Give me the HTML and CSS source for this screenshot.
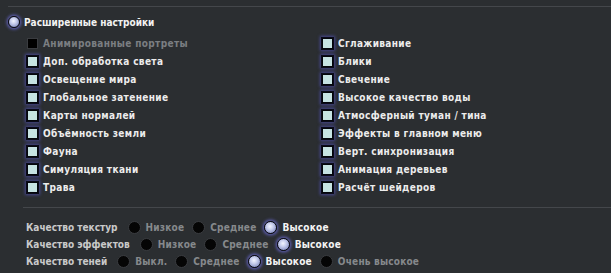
FILE: index.html
```html
<!DOCTYPE html>
<html lang="ru">
<head>
<meta charset="utf-8">
<link rel="stylesheet" href="styles.css">
</head>
<body>
<div class="panel">
  <div class="rule rule-top"></div>
  <div class="master">
    <span class="radio on"></span>
    <span class="master-label">Расширенные настройки</span>
  </div>
  <div class="options">
    <div class="col">
      <div class="opt disabled"><span class="box"></span><span>Анимированные портреты</span></div>
      <div class="opt"><span class="box"></span><span>Доп. обработка света</span></div>
      <div class="opt"><span class="box"></span><span>Освещение мира</span></div>
      <div class="opt"><span class="box"></span><span>Глобальное затенение</span></div>
      <div class="opt"><span class="box"></span><span>Карты нормалей</span></div>
      <div class="opt"><span class="box"></span><span>Объёмность земли</span></div>
      <div class="opt"><span class="box"></span><span>Фауна</span></div>
      <div class="opt"><span class="box"></span><span>Симуляция ткани</span></div>
      <div class="opt"><span class="box"></span><span>Трава</span></div>
    </div>
    <div class="col">
      <div class="opt"><span class="box"></span><span>Сглаживание</span></div>
      <div class="opt"><span class="box"></span><span>Блики</span></div>
      <div class="opt"><span class="box"></span><span>Свечение</span></div>
      <div class="opt"><span class="box"></span><span>Высокое качество воды</span></div>
      <div class="opt"><span class="box"></span><span>Атмосферный туман / тина</span></div>
      <div class="opt"><span class="box"></span><span>Эффекты в главном меню</span></div>
      <div class="opt"><span class="box"></span><span>Верт. синхронизация</span></div>
      <div class="opt"><span class="box"></span><span>Анимация деревьев</span></div>
      <div class="opt"><span class="box"></span><span>Расчёт шейдеров</span></div>
    </div>
  </div>
  <div class="rule rule-bottom"></div>
  <div class="quality">
    <div class="qrow">
      <span class="qlabel">Качество текстур</span>
      <span class="choice"><span class="radio"></span><span>Низкое</span></span>
      <span class="choice"><span class="radio"></span><span>Среднее</span></span>
      <span class="choice sel"><span class="radio on"></span><span>Высокое</span></span>
    </div>
    <div class="qrow">
      <span class="qlabel">Качество эффектов</span>
      <span class="choice"><span class="radio"></span><span>Низкое</span></span>
      <span class="choice"><span class="radio"></span><span>Среднее</span></span>
      <span class="choice sel"><span class="radio on"></span><span>Высокое</span></span>
    </div>
    <div class="qrow">
      <span class="qlabel">Качество теней</span>
      <span class="choice"><span class="radio"></span><span>Выкл.</span></span>
      <span class="choice"><span class="radio"></span><span>Среднее</span></span>
      <span class="choice sel"><span class="radio on"></span><span>Высокое</span></span>
      <span class="choice"><span class="radio"></span><span>Очень высокое</span></span>
    </div>
  </div>
</div>
</body>
</html>
```
FILE: styles.css
```css
html, body {
  margin: 0;
  padding: 0;
  background: #2b2e31;
}
body {
  width: 611px;
  height: 273px;
  overflow: hidden;
  font-family: "DejaVu Sans Condensed", "DejaVu Sans", "Liberation Sans", sans-serif;
  font-stretch: condensed;
  font-size: 10px;
  font-weight: bold;
  color: #e6e6e6;
}
.panel {
  padding-top: 6px;
}
.rule {
  height: 1px;
  background: #44474b;
}
.rule-top {
  margin-left: 8px;
}
.master {
  display: flex;
  align-items: center;
  gap: 4px;
  height: 16px;
  margin-top: 7px;
  padding-left: 8px;
}
.master-label {
  color: #f2f2f2;
  letter-spacing: 0;
}
.radio {
  box-sizing: border-box;
  width: 12px;
  height: 12px;
  border-radius: 50%;
  background: #050505;
  border: 1px solid #3a3c40;
  flex: none;
}
.radio.on {
  background: radial-gradient(circle at 45% 40%, #f2f4ff 0, #c9cfee 35%, #8e97c8 75%);
  border: 1.5px solid #0a0a14;
  box-shadow: 0 0 3px 1.5px rgba(110, 110, 220, 0.7);
}
.options {
  display: grid;
  grid-template-columns: 295px 1fr;
  margin-top: 4px;
  padding-left: 27px;
}
.col {
  display: flex;
  flex-direction: column;
}
.opt {
  display: flex;
  align-items: center;
  gap: 5px;
  height: 18px;
  color: #ececec;
  letter-spacing: 0.35px;
}
.box {
  box-sizing: border-box;
  width: 11px;
  height: 11px;
  background: #c6e3e3;
  border: 1px solid #05060c;
  box-shadow: 0 0 0 1px #0a0b18, 0 0 3px 2px rgba(90, 90, 210, 0.6);
  flex: none;
}
.opt.disabled {
  color: #7b7e82;
}
.opt.disabled .box {
  background: #000;
  border: 1px solid #3a3c40;
  box-shadow: none;
}
.rule-bottom {
  margin-top: 11px;
  margin-left: 23px;
}
.quality {
  padding-top: 11px;
  padding-left: 26px;
}
.qrow {
  display: flex;
  align-items: center;
  height: 17px;
}
.qlabel {
  color: #c9c9c9;
  margin-right: 10px;
  letter-spacing: 0;
}
.choice {
  display: flex;
  align-items: center;
  gap: 5px;
  margin-right: 8px;
  color: #86898c;
  letter-spacing: 0.2px;
}
.choice .radio {
  width: 13px;
  height: 13px;
}
.choice.sel {
  color: #f4f4f4;
}
```
